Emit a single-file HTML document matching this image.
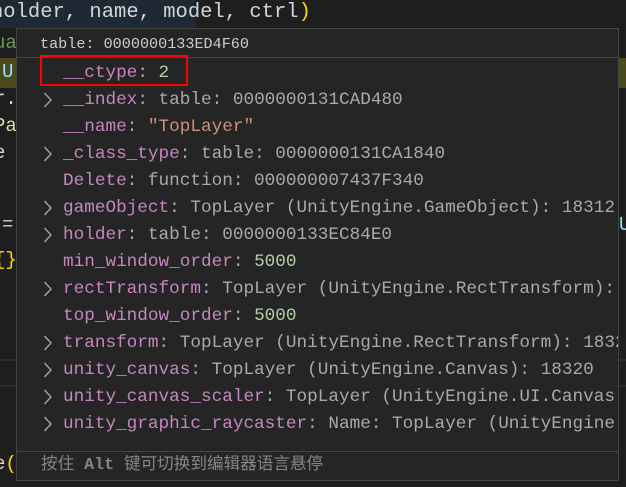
<!DOCTYPE html>
<html><head><meta charset="utf-8"><style>
body{margin:0;width:626px;height:487px;overflow:hidden;background:#1e1e1e;position:relative;font-family:"Liberation Mono",monospace;font-size:17.7px;}
.a{position:absolute;white-space:pre;line-height:22px;}
#hov{position:absolute;left:16px;top:28px;width:601px;height:451px;background:#252526;border:1px solid #454545;overflow:hidden;}
.k{color:#c586c0}.v{color:#a9a9a9}.s{color:#ce9178}.n{color:#b5cea8}
.chev{position:absolute;width:10px;height:16px;}
</style></head><body>
<div style="position:absolute;left:0;top:0;width:195px;height:28px;background:#1f2935"></div>
<div class="a" style="left:-9px;top:2px;color:#d4d4d4;font-size:20.5px">holder, name, model, ctrl<span style="color:#ffd700">)</span></div>
<div style="position:absolute;left:0;top:58px;width:16px;height:30px;background:#4a4a1c"></div>
<div style="position:absolute;left:619px;top:58px;width:7px;height:30px;background:#4a4a1c"></div>
<div style="position:absolute;left:0;top:359px;width:626px;height:2px;background:#2c2c2c"></div>
<div style="position:absolute;left:0;top:385px;width:626px;height:2px;background:#2c2c2c"></div>
<div class="a" style="left:-6px;top:32px;color:#6a9955;font-size:19px">ua</div>
<div class="a" style="left:2px;top:61px;color:#9cdcfe;font-size:19px">U</div>
<div class="a" style="left:-6px;top:88px;color:#d4d4d4;font-size:19px">r.</div>
<div class="a" style="left:-6px;top:115px;color:#dcdcaa;font-size:19px">Pa</div>
<div class="a" style="left:-6px;top:142px;color:#d4d4d4;font-size:19px">e</div>
<div class="a" style="left:2px;top:214px;color:#d4d4d4;font-size:19px">=</div>
<div class="a" style="left:-6px;top:249px;color:#ffd700;font-size:19px">{}</div>
<div class="a" style="left:619px;top:214px;color:#9cdcfe;font-size:19px">U</div>
<div class="a" style="left:-6px;top:453px;color:#dcdcaa;font-size:19px">e<span style="color:#ffd700">(</span></div>
<div id="hov">
<div class="a v" style="left:23px;top:4px;color:#cccccc;font-size:15.15px">table: 0000000133ED4F60</div>
<div style="position:absolute;left:0;top:28px;width:100%;height:1px;background:#454545"></div>
<div style="position:absolute;left:23px;top:26px;width:144px;height:27px;border:2px solid #f00;box-sizing:content-box"></div>
<div class="a" style="left:46px;top:33px"><span class="k">__ctype</span><span class="v">: </span><span class="n">2</span></div>
<div class="a" style="left:46px;top:60px"><span class="k">__index</span><span class="v">: table: 0000000131CAD480</span></div>
<div class="a" style="left:46px;top:87px"><span class="k">__name</span><span class="v">: </span><span class="s">"TopLayer"</span></div>
<div class="a" style="left:46px;top:114px"><span class="k">_class_type</span><span class="v">: table: 0000000131CA1840</span></div>
<div class="a" style="left:46px;top:141px"><span class="k">Delete</span><span class="v">: function: 000000007437F340</span></div>
<div class="a" style="left:46px;top:168px"><span class="k">gameObject</span><span class="v">: TopLayer (UnityEngine.GameObject): 18312</span></div>
<div class="a" style="left:46px;top:195px"><span class="k">holder</span><span class="v">: table: 0000000133EC84E0</span></div>
<div class="a" style="left:46px;top:222px"><span class="k">min_window_order</span><span class="v">: </span><span class="n">5000</span></div>
<div class="a" style="left:46px;top:249px"><span class="k">rectTransform</span><span class="v">: TopLayer (UnityEngine.RectTransform):</span></div>
<div class="a" style="left:46px;top:276px"><span class="k">top_window_order</span><span class="v">: </span><span class="n">5000</span></div>
<div class="a" style="left:46px;top:303px"><span class="k">transform</span><span class="v">: TopLayer (UnityEngine.RectTransform): 1832</span></div>
<div class="a" style="left:46px;top:330px"><span class="k">unity_canvas</span><span class="v">: TopLayer (UnityEngine.Canvas): 18320</span></div>
<div class="a" style="left:46px;top:357px"><span class="k">unity_canvas_scaler</span><span class="v">: TopLayer (UnityEngine.UI.Canvas</span></div>
<div class="a" style="left:46px;top:384px"><span class="k">unity_graphic_raycaster</span><span class="v">: Name: TopLayer (UnityEngine</span></div>
<svg class="chev" style="left:26px;top:63px" viewBox="0 0 10 16"><polyline points="1.5,1 8,8 1.5,15" fill="none" stroke="#9aa6b2" stroke-width="1.4"/></svg>
<svg class="chev" style="left:26px;top:117px" viewBox="0 0 10 16"><polyline points="1.5,1 8,8 1.5,15" fill="none" stroke="#9aa6b2" stroke-width="1.4"/></svg>
<svg class="chev" style="left:26px;top:171px" viewBox="0 0 10 16"><polyline points="1.5,1 8,8 1.5,15" fill="none" stroke="#9aa6b2" stroke-width="1.4"/></svg>
<svg class="chev" style="left:26px;top:198px" viewBox="0 0 10 16"><polyline points="1.5,1 8,8 1.5,15" fill="none" stroke="#9aa6b2" stroke-width="1.4"/></svg>
<svg class="chev" style="left:26px;top:252px" viewBox="0 0 10 16"><polyline points="1.5,1 8,8 1.5,15" fill="none" stroke="#9aa6b2" stroke-width="1.4"/></svg>
<svg class="chev" style="left:26px;top:306px" viewBox="0 0 10 16"><polyline points="1.5,1 8,8 1.5,15" fill="none" stroke="#9aa6b2" stroke-width="1.4"/></svg>
<svg class="chev" style="left:26px;top:333px" viewBox="0 0 10 16"><polyline points="1.5,1 8,8 1.5,15" fill="none" stroke="#9aa6b2" stroke-width="1.4"/></svg>
<svg class="chev" style="left:26px;top:360px" viewBox="0 0 10 16"><polyline points="1.5,1 8,8 1.5,15" fill="none" stroke="#9aa6b2" stroke-width="1.4"/></svg>
<svg class="chev" style="left:26px;top:387px" viewBox="0 0 10 16"><polyline points="1.5,1 8,8 1.5,15" fill="none" stroke="#9aa6b2" stroke-width="1.4"/></svg>
<div style="position:absolute;left:0;top:422px;width:100%;height:1px;background:#454545"></div>
<div class="a" style="left:24px;top:425px;font-family:'Liberation Mono','Noto Sans CJK SC',monospace;font-size:16.6px;color:#858585">按住 <b>Alt</b> 键可切换到编辑器语言悬停</div>
</div>
</body></html>
